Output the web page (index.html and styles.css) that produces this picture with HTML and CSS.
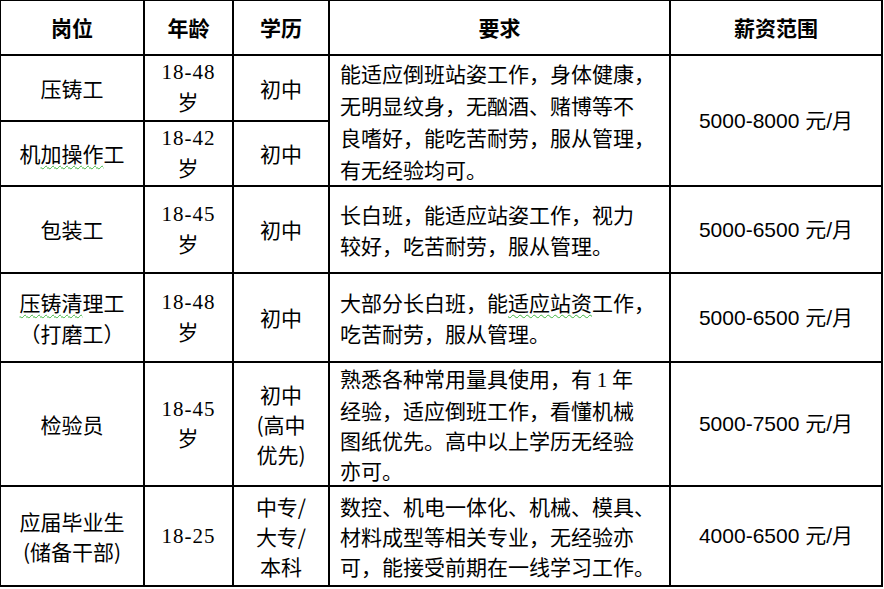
FILE: index.html
```html
<!DOCTYPE html>
<html lang="zh-CN">
<head>
<meta charset="utf-8">
<title>招聘岗位</title>
<link rel="stylesheet" href="styles.css">
</head>
<body>
<table class="jobs">
  <colgroup>
    <col class="c-pos"><col class="c-age"><col class="c-edu"><col class="c-req"><col class="c-pay">
  </colgroup>
  <thead>
    <tr class="r-head"><th>岗位</th><th>年龄</th><th>学历</th><th>要求</th><th>薪资范围</th></tr>
  </thead>
  <tbody>
    <tr class="r1">
      <td>压铸工</td>
      <td class="age">18-48<br>岁</td>
      <td>初中</td>
      <td class="req req-wide" rowspan="2">能适应倒班站姿工作，身体健康，<br>无明显纹身，无酗酒、赌博等不<br>良嗜好，能吃苦耐劳，服从管理，<br>有无经验均可。</td>
      <td class="pay" rowspan="2">5000-8000 元/月</td>
    </tr>
    <tr class="r2">
      <td>机<span class="sq">加操作</span>工</td>
      <td class="age">18-42<br>岁</td>
      <td>初中</td>
    </tr>
    <tr class="r3">
      <td>包装工</td>
      <td class="age">18-45<br>岁</td>
      <td>初中</td>
      <td class="req">长白班，能适应站姿工作，视力<br>较好，吃苦耐劳，服从管理。</td>
      <td class="pay">5000-6500 元/月</td>
    </tr>
    <tr class="r4">
      <td><span class="sq">压铸清</span>理工<br>（打磨工）</td>
      <td class="age">18-48<br>岁</td>
      <td>初中</td>
      <td class="req">大部分长白班，能<span class="sq">适应站资</span>工作，<br>吃苦耐劳，服从管理。</td>
      <td class="pay">5000-6500 元/月</td>
    </tr>
    <tr class="r5 tight">
      <td>检验员</td>
      <td class="age">18-45<br>岁</td>
      <td>初中<br>(高中<br>优先)</td>
      <td class="req">熟悉各种常用量具使用，有 <span class="num">1</span> 年<br>经验，适应倒班工作，看懂机械<br>图纸优先。高中以上学历无经验<br>亦可。</td>
      <td class="pay">5000-7500 元/月</td>
    </tr>
    <tr class="r6 tight">
      <td>应届毕业生<br>(储备干部)</td>
      <td class="age">18-25</td>
      <td>中专/<br>大专/<br>本科</td>
      <td class="req">数控、机电一体化、机械、模具、<br>材料成型等相关专业，无经验亦<br>可，能接受前期在一线学习工作。</td>
      <td class="pay">4000-6500 元/月</td>
    </tr>
  </tbody>
</table>
</body>
</html>
```
FILE: styles.css
```css
html, body {
  margin: 0;
  padding: 0;
  background: #ffffff;
}

body {
  font-family: "Noto Sans CJK SC", "Noto Sans", sans-serif;
  color: #000000;
}

.jobs {
  border-collapse: collapse;
  table-layout: fixed;
  width: 882px;
  margin: -1px 0 0 -1px;
  font-size: 21px;
  line-height: 31px;
}

.c-pos { width: 144px; }
.c-age { width: 89px; }
.c-edu { width: 96px; }
.c-req { width: 341px; }
.c-pay { width: 212px; }

.jobs th,
.jobs td {
  border: 2px solid #000000;
  padding: 0 4px;
  text-align: center;
  vertical-align: middle;
  white-space: nowrap;
  font-weight: 400;
}

.jobs th {
  font-weight: 700;
  font-size: 21px;
}

.r-head { height: 55px; }
.r1 { height: 66px; }
.r2 { height: 65px; }
.r3 { height: 87px; }
.r4 { height: 89px; }
.r5 { height: 124px; }
.r6 { height: 100px; }

.tight td { line-height: 30px; }

.jobs td.age {
  font-family: "Liberation Serif", "Noto Sans CJK SC", serif;
  letter-spacing: 1px;
}

.jobs td.req {
  text-align: left;
  padding: 0 8px 0 10px;
}

.jobs td.req-wide {
  line-height: 32px;
}

.jobs td.pay {
  font-family: "Liberation Sans", "Noto Sans CJK SC", sans-serif;
}

.num {
  font-family: "Liberation Serif", serif;
}

.sq {
  text-decoration: underline wavy #3fb43f;
  text-decoration-thickness: 1px;
  text-underline-offset: 3px;
}
```
